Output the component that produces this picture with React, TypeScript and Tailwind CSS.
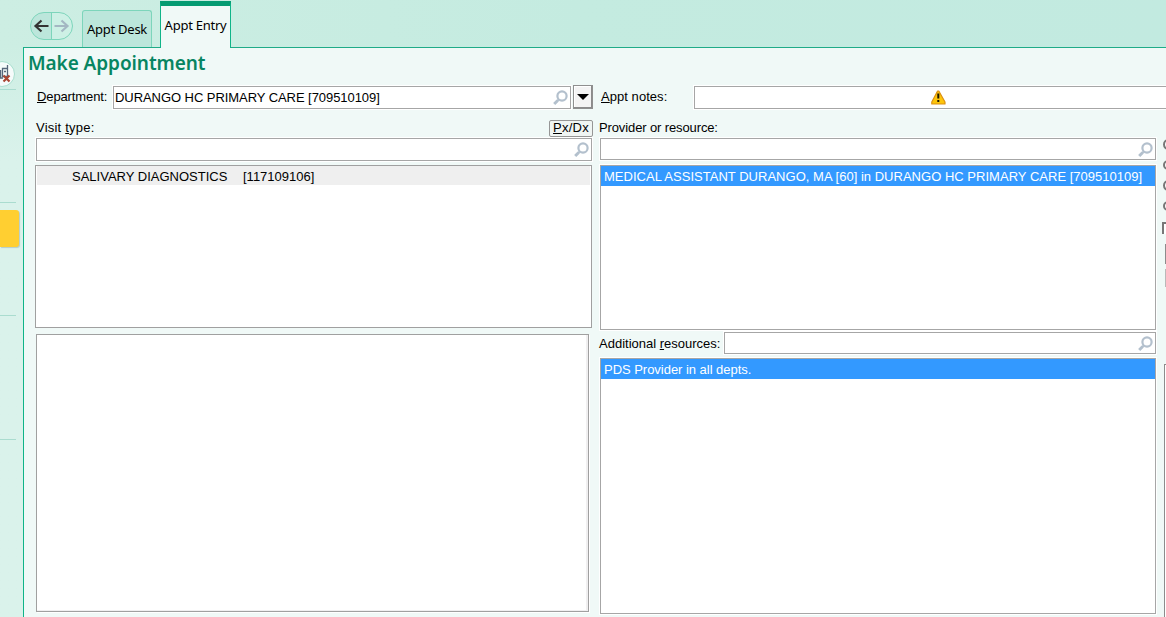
import type { ReactNode } from 'react';

function SearchIcon() {
  return (
    <svg width="15" height="16" viewBox="0 0 15 16" fill="none" className="mt-px shrink-0">
      <circle cx="9" cy="6" r="4.6" stroke="#b3c0cd" strokeWidth="2.2" />
      <path d="M5.6 9.6 4.200 11" stroke="#b3c0cd" strokeWidth="2" />
      <path d="M4.700 10.500 1.200 14" stroke="#b3c0cd" strokeWidth="3" />
    </svg>
  );
}

function Field({ className, children }: { className: string; children?: ReactNode }) {
  return (
    <div className={`flex items-center justify-between border border-[#a6a6a6] bg-white outline-1 outline-white ${className}`}>
      <span className="whitespace-pre pl-px pt-px tracking-[-.06px]">{children}</span>
      <SearchIcon />
    </div>
  );
}

function Header() {
  return (
    <header className="flex h-[47px] shrink-0 items-end bg-linear-to-r from-[#cdeee3] via-[#c4ebe0] to-[#c2eae0] font-['Noto_Sans',sans-serif] text-[13px] tracking-[-.25px] text-black">
      <svg width="44" height="30" viewBox="0 0 44 30" fill="none" className="mb-[6px] ml-[30px] shrink-0">
        <path d="M22 1.500h-8a13.500 13.500 0 0 0 0 27h8z" fill="#bce6db" />
        <path d="M22 1.500h7a13.500 13.500 0 0 1 0 27h-7z" fill="#cdf0e5" />
        <rect x=".5" y="1.5" width="42" height="27" rx="13.5" stroke="#7dd5bb" />
        <path d="M21.500 1.500v27" stroke="#7dd5bb" />
        <path d="M18.500 15H6M11.500 9.500 5.500 15l6 5.500" stroke="#333" strokeWidth="2.200" />
        <path d="M24.500 15H37M31.500 9.500l6 5.500-6 5.500" stroke="#a3b7c2" strokeWidth="2.200" />
      </svg>
      <div className="ml-[8px] flex h-[37px] w-[70px] items-center justify-center rounded-t-[3px] border border-b-0 border-[#7dd5bb] bg-[#bce6db] pb-px">
        <span className="whitespace-nowrap">Appt Desk</span>
      </div>
      <div className="relative -mb-px ml-[8px] flex h-[47px] w-[71px] items-center justify-center border-x border-t-[5px] border-x-[#10b488] border-t-[#059b72] bg-[#f0f9f7] pb-[4px]">
        <span className="whitespace-nowrap">Appt Entry</span>
      </div>
    </header>
  );
}

function Sidebar() {
  return (
    <aside className="-mt-px flex w-[23px] shrink-0 flex-col bg-linear-to-b from-[#cdeee3] to-[#daf2eb] to-20%">
      <svg width="16" height="28" viewBox="0 0 16 28" fill="none" className="mt-[14px] shrink-0">
        <circle cx="2" cy="14" r="12.500" fill="#f5fbfa" stroke="#a8dfcf" />
        <path d="M2.500 8.500h5v8h-5zM7.500 5v10M4 11.500h2" stroke="#56677a" strokeWidth="1.300" />
        <path d="M.5 10v8H3" stroke="#56677a" strokeWidth="1.500" />
        <path d="m3.500 15.500 6 6m0-6-6 6" stroke="#a94632" strokeWidth="2.200" />
      </svg>
      <div className="mt-px h-px w-4 shrink-0 bg-[#aadccf]" />
      <div className="mt-[112px] h-px w-4 shrink-0 bg-[#aadccf]" />
      <div className="mt-[7px] h-[37px] w-[19px] shrink-0 rounded-r-[3px] bg-[#ffcf31] shadow-[1px_1px_1px_#b5cdc8]" />
      <div className="mt-[68px] h-px w-4 shrink-0 bg-[#aadccf]" />
      <div className="mt-[123px] h-px w-4 shrink-0 bg-[#aadccf]" />
    </aside>
  );
}

function LeftColumn() {
  return (
    <section className="flex w-[570px] shrink-0 flex-col">
      <div className="flex h-6 items-center">
        <label className="ml-[13px] w-[76px] tracking-[-.12px]"><u>D</u>epartment:</label>
        <Field className="h-[23px] w-[458px] pr-[2px]">DURANGO HC PRIMARY CARE [709510109]</Field>
        <button className="ml-[2px] flex h-6 w-5 items-center justify-center border border-[#8f8f8f] bg-[#f4f4f4] pr-px shadow-[inset_-1px_-1px_0_#8b8b8b,inset_1px_1px_0_#fff]">
          <svg width="12" height="6" viewBox="0 0 12 6"><path d="M0 0h12L6 6z" fill="#000" /></svg>
        </button>
      </div>
      <div className="mt-[10px] flex h-[18px] items-center justify-between pl-3">
        <label className="tracking-[.22px]">Visit <u>t</u>ype:</label>
        <button className="mr-px h-[17px] w-11 rounded-[2px] border border-[#969696] bg-[#f0f5f3] pb-px text-[13px] leading-[14px] tracking-[.25px]"><u>P</u>x/Dx</button>
      </div>
      <Field className="ml-3 mt-px h-[23px] w-[556px] pr-[2px]" />
      <div className="ml-[11px] mt-1 h-[163px] w-[557px] border border-[#a0a0a0] bg-white p-px pt-0">
        <div className="flex h-[19px] items-center bg-[#efefef] pl-[35px] pt-[3px]">
          <span className="w-[171px] whitespace-nowrap">SALIVARY DIAGNOSTICS</span>
          <span>[117109106]</span>
        </div>
      </div>
      <div className="ml-3 mt-[6px] h-[278px] w-[553px] border border-[#a0a0a0] bg-white shadow-[inset_-2px_-1px_0_#f0eff0,1px_1px_0_#fff]" />
    </section>
  );
}

function RightColumn() {
  return (
    <section className="flex min-w-0 flex-1 flex-col">
      <div className="flex h-6 shrink-0 items-center">
        <label className="ml-[7px] w-[93px] tracking-[.05px]"><u>A</u>ppt notes:</label>
        <div className="flex h-[23px] flex-1 items-center border border-r-0 border-[#a6a6a6] bg-white pl-[236px] outline-1 outline-white">
          <svg width="15" height="15" viewBox="0 0 15 15">
            <path d="M6.600 1h1.200L14 12v2H.8v-2z" fill="#fdc50a" stroke="#dc9012" strokeWidth="1.200" strokeLinejoin="round" />
            <path d="M7.300 3.500v5M7.300 10v2" stroke="#1c1600" strokeWidth="2" />
          </svg>
        </div>
      </div>
      <div className="flex min-h-0 flex-1">
        <div className="ml-[6px] flex w-[556px] shrink-0 flex-col">
          <label className="-ml-px mt-[10px] flex h-[19px] items-center pb-[2px] tracking-[-.12px]"><span>Provider or resource:</span></label>
          <Field className="h-[22px] w-[556px] pr-[2px]" />
          <div className="mt-[5px] h-[165px] border border-[#a6a6a6] bg-white outline-1 outline-white">
            <div className="h-5 whitespace-nowrap bg-[#3399ff] pl-[3px] leading-[21px] tracking-[.02px] text-white">
              MEDICAL ASSISTANT DURANGO, MA [60] in DURANGO HC PRIMARY CARE [709510109]
            </div>
          </div>
          <div className="mt-[2px] flex h-[22px] items-center">
            <label className="-ml-px w-[125px] whitespace-nowrap pt-px">Additional <u>r</u>esources:</label>
            <Field className="h-[22px] flex-1 pr-[2px]" />
          </div>
          <div className="mt-1 h-[256px] border border-[#a6a6a6] bg-white outline-1 outline-white">
            <div className="h-5 bg-[#3399ff] pl-[3px] leading-[21px] tracking-[-.03px] text-white">PDS Provider in all depts.</div>
          </div>
        </div>
        <div className="flex flex-1 flex-col overflow-hidden pl-[6px] pt-[30px]">
          <div className="flex flex-col gap-[10px] pl-px">
            {[0, 1, 2, 3].map((i) => (
              <span key={i} className="block size-[10.5px] shrink-0 rounded-full border-2 border-[#777] bg-white" />
            ))}
          </div>
          <div className="mt-[11px] h-3 w-3 shrink-0 border-l-2 border-t-2 border-[#777] bg-white" />
          <div className="ml-[3px] mt-[10px] h-5 w-3 shrink-0 bg-[#8c8c8c]" />
          <div className="ml-[3px] mt-[5px] h-[18px] w-3 shrink-0 bg-[#b9b9b9]" />
          <div className="ml-[2px] mt-[77px] w-4 flex-1 border-l border-t border-[#8c8c8c] bg-white" />
        </div>
      </div>
    </section>
  );
}

export default function App() {
  return (
    <div className="flex h-[617px] w-[1166px] flex-col overflow-hidden bg-[#daf2eb] font-['Liberation_Sans',Arial,sans-serif] text-[13px] leading-4 text-black">
      <Header />
      <div className="flex min-h-0 flex-1">
        <Sidebar />
        <main className="flex min-w-0 flex-1 flex-col border-l border-t border-l-[#10b488] border-t-[#1fab88] bg-[#f0f9f7]">
          <h1 className="h-[37px] shrink-0 pl-1 font-['Noto_Sans',sans-serif] text-[19px] font-semibold leading-[30px] tracking-[-.08px] text-[#078562]">Make Appointment</h1>
          <div className="flex min-h-0 flex-1">
            <LeftColumn />
            <RightColumn />
          </div>
        </main>
      </div>
    </div>
  );
}
